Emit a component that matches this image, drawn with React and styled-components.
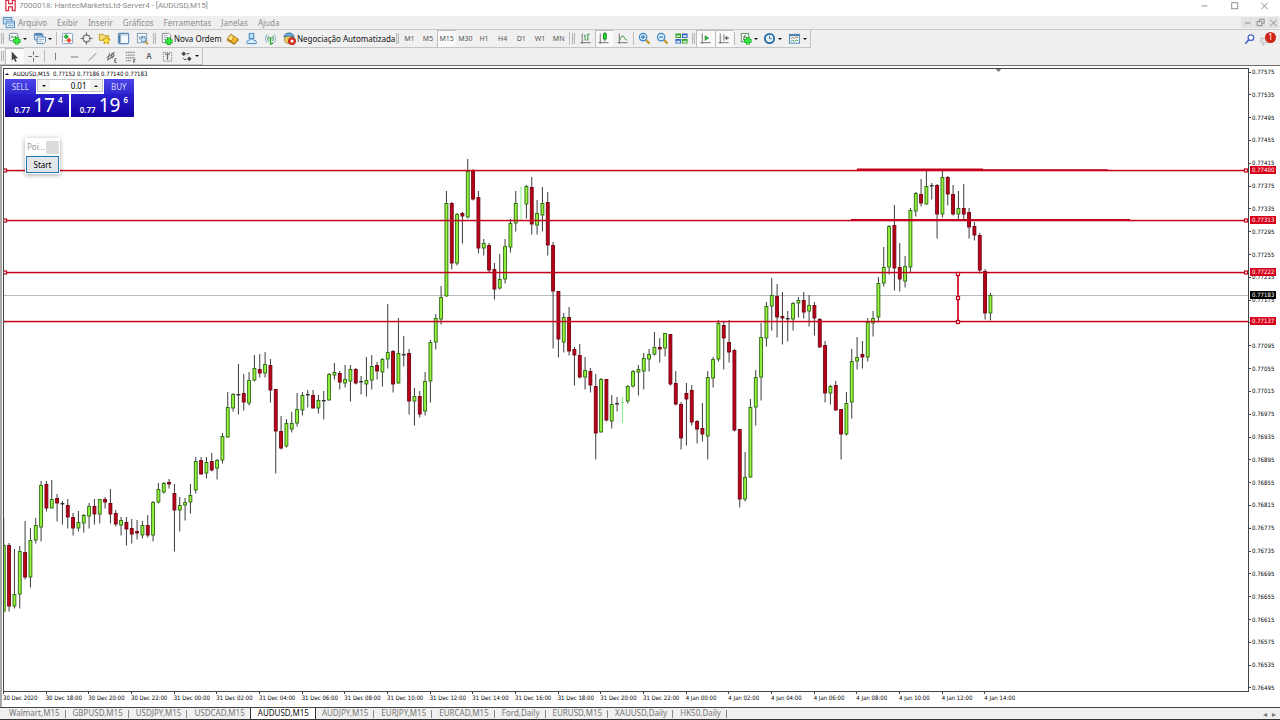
import { createGlobalStyle, styled } from 'styled-components';

const MENUS = ['Arquivo', 'Exibir', 'Inserir', 'Gráficos', 'Ferramentas', 'Janelas', 'Ajuda'];
const TIMEFRAMES = ['M1', 'M5', 'M15', 'M30', 'H1', 'H4', 'D1', 'W1', 'MN'];
const TABS = [
  'Walmart,M15',
  'GBPUSD,M15',
  'USDJPY,M15',
  'USDCAD,M15',
  'AUDUSD,M15',
  'AUDJPY,M15',
  'EURJPY,M15',
  'EURCAD,M15',
  'Ford,Daily',
  'EURUSD,M15',
  'XAUUSD,Daily',
  'HK50,Daily',
];
const TIMES = [
  '30 Dec 2020',
  '30 Dec 18:00',
  '30 Dec 20:00',
  '30 Dec 22:00',
  '31 Dec 00:00',
  '31 Dec 02:00',
  '31 Dec 04:00',
  '31 Dec 06:00',
  '31 Dec 08:00',
  '31 Dec 10:00',
  '31 Dec 12:00',
  '31 Dec 14:00',
  '31 Dec 16:00',
  '31 Dec 18:00',
  '31 Dec 20:00',
  '31 Dec 22:00',
  '4 Jan 00:00',
  '4 Jan 02:00',
  '4 Jan 04:00',
  '4 Jan 06:00',
  '4 Jan 08:00',
  '4 Jan 10:00',
  '4 Jan 12:00',
  '4 Jan 14:00',
];
const PRICES = Array.from({ length: 28 }, (_, i) => ((77575 - i * 40) / 100000).toFixed(5));

const LEVELS = [
  { price: '0.77400', y: 170, handles: true },
  { price: '0.77313', y: 220, handles: true },
  { price: '0.77222', y: 272, handles: true },
  { price: '0.77137', y: 321, handles: false },
];

// kind (u up, d down, n doji, g ghost), high, body top, body bottom, low
const CANDLES = `
u 518 545 611 612|d 543 545 606 611|u 549 594 606 608|u 546 551 594 608|d 521 552 577 579
u 528 540 577 587|u 518 525 540 543|u 481 485 527 541|d 481 484 508 511|u 480 499 508 508
d 494 498 503 521|n 501 503 504 524|d 499 505 517 528|d 513 517 528 535|u 511 522 528 531
u 514 515 523 532|u 503 506 516 528|d 499 506 514 524|u 499 499 514 523|d 497 499 502 508
d 489 503 514 523|d 510 513 524 526|u 517 520 525 535|d 517 522 529 545|d 519 528 534 543
d 520 531 533 539|u 521 525 535 538|d 515 525 535 537|u 501 502 535 541|u 483 489 502 503
u 482 483 492 493|d 479 482 484 488|d 484 493 510 551|u 497 505 510 531|u 498 502 505 520
u 484 495 502 513|u 457 461 490 493|d 457 460 474 474|u 457 462 473 478|d 453 461 470 471
u 459 460 468 479|u 433 436 460 463|u 392 407 437 437|u 393 394 408 411|n 364 394 395 414
d 374 393 402 410|u 372 380 403 405|u 355 368 380 381|d 354 369 373 377|u 352 364 373 377
d 359 365 390 402|d 389 389 431 473|d 416 431 448 449|u 419 423 446 447|u 412 423 429 432
u 393 409 423 426|u 392 395 410 415|n 390 394 395 407|d 390 395 408 408|u 395 400 408 413
n 391 400 401 419|u 373 374 400 400|u 363 372 375 379|d 371 373 382 389|u 365 379 383 387
u 365 369 381 401|d 368 369 383 384|n 376 381 382 394|u 357 380 384 396|u 355 366 380 389
d 362 365 371 379|u 358 359 372 386|u 304 352 359 368|d 350 351 384 392|u 318 353 383 383
n 336 354 355 366|d 349 353 401 414|u 388 396 401 425|d 391 396 414 417|u 372 381 411 415
u 340 342 381 402|u 314 318 342 349|u 286 297 319 324|u 191 203 296 296|d 202 203 263 269
u 213 214 263 265|d 212 213 216 243|u 159 171 217 218|d 169 170 199 200|d 191 197 248 253
u 239 243 248 255|d 243 245 270 272|d 263 269 289 299|u 254 279 288 289|u 239 246 279 283
u 219 223 247 252|u 191 203 223 231|g 187 187 220 220|u 185 186 204 218|d 177 187 224 234
u 200 213 225 234|u 187 203 215 231|d 192 202 245 255|d 242 245 291 348|d 291 291 339 357
u 313 317 342 352|d 307 317 351 355|d 347 349 355 385|d 344 355 377 378|u 357 370 377 389
d 368 371 385 392|d 374 386 433 459|u 378 379 432 432|d 379 379 420 421|u 395 404 421 428
n 397 403 404 411|g 397 402 403 423|u 385 386 401 403|u 370 371 386 387|u 365 369 372 395
u 353 358 371 389|u 349 354 359 371|u 332 347 354 355|d 338 347 349 362|u 333 333 348 356
d 334 334 384 385|d 371 383 404 405|d 402 404 438 449|d 383 393 399 445|d 385 390 422 425
d 420 421 429 443|d 403 428 434 441|u 371 377 436 459|u 357 359 378 387|u 320 323 359 361
d 322 325 338 369|d 320 342 352 362|d 349 350 430 431|d 429 429 499 507|u 452 477 499 501
u 399 407 477 477|u 370 377 407 425|u 323 337 377 400|u 302 306 338 346|u 278 295 306 330
d 284 296 317 337|d 292 316 318 344|n 311 318 319 341|u 302 303 319 330|u 297 300 303 317
d 292 300 312 318|u 295 305 311 326|d 302 305 318 335|d 318 319 347 347|d 341 345 393 402
u 385 386 393 404|d 381 385 410 410|d 409 409 434 459|u 392 403 434 435|u 349 361 402 418
u 337 357 361 369|d 341 354 357 368|u 318 322 357 361|u 311 318 323 336|u 277 283 317 322
u 247 267 283 286|u 225 226 267 274|d 205 225 268 290|d 243 267 279 291|u 256 266 281 287
u 208 210 267 272|u 192 193 211 216|d 179 194 203 206|u 171 186 204 204|n 183 185 186 199
d 184 185 214 238|u 169 177 214 217|d 176 177 194 205|d 185 194 214 215|u 191 208 214 219
d 184 208 214 219|d 208 212 227 238|d 222 226 235 240|d 233 235 270 273|d 269 271 313 319
u 293 295 313 320`
  .trim()
  .split(/[|\n]/)
  .map(row => {
    const [kind, ...levels] = row.split(' ');
    const [high, top, bottom, low] = levels.map(Number);
    return { kind, high, top, bottom, low };
  });

const FILL = { u: '#96f23c', d: '#bc0018', n: '#333333' };
const STROKE = { u: '#2b6a10', d: '#70000f', n: '#333333' };

const Candle = ({ index, kind, high, top, bottom, low }) => {
  const x = 3.75 + (index * 16) / 3;
  if (kind === 'g') {
    const wide = bottom - top > 10;
    return (
      <g fill={wide ? '#c4f8c4' : '#7dee7d'}>
        <rect x={x - (wide ? 1 : 0.5)} y={high} width={wide ? 2 : 1} height={low - high} />
        {!wide && <rect x={x - 1.5} y={top} width="3" height="1" />}
      </g>
    );
  }
  return (
    <g>
      <rect x={x - 0.5} y={high} width="1" height={low - high + 0.5} fill="#3c3c3c" />
      <rect
        x={x - 1.45}
        y={top + 0.5}
        width="2.9"
        height={Math.max(bottom - top - 0.5, 0.3)}
        fill={FILL[kind]}
        stroke={STROKE[kind]}
        strokeWidth=".9"
      />
    </g>
  );
};

const Handle = ({ x, y }) => (
  <rect x={x - 1.5} y={y - 1.5} width="3" height="3" fill="#fff" stroke="#c4001c" strokeWidth="1.200" />
);

const PriceChart = () => (
  <ChartSvg role="img" aria-label="AUDUSD,M15">
    <g transform="translate(-4 -69)">
      <path d="M995 68h7l-3.500 4z" fill="#777" />
      <rect x="4" y="295" width="100%" height="1" fill="#b4babd" />
      {CANDLES.map((candle, index) => (
        <Candle key={index} index={index} {...candle} />
      ))}
      {LEVELS.map(({ price, y }) => (
        <rect key={price} x="4" y={y - 0.2} width="100%" height="1.500" fill="#c4001c" />
      ))}
      <path d="M857 169.300H983" stroke="#c4001c" strokeWidth="1.800" />
      <path d="M983 169.800H1108M851 219.500H1130" stroke="#c4001c" strokeWidth="1.200" />
      <path d="M958 274V322" stroke="#d0142c" strokeWidth="1.800" />
      <Handle x={958} y={274} />
      <Handle x={958} y={298} />
      <Handle x={958} y={322} />
      {LEVELS.filter(level => level.handles).map(({ price, y }) => (
        <Handle key={price} x={5} y={y + 0.5} />
      ))}
    </g>
    <svg x="100%" overflow="visible">
      {LEVELS.filter(level => level.handles).map(({ price, y }) => (
        <Handle key={price} x={-2} y={y - 68.5} />
      ))}
    </svg>
  </ChartSvg>
);

const ICONS = {
  logo: (
    <g fill="none" stroke="#d8283c" strokeWidth="1.300">
      <path d="M2 1.500h3v3.500h4V1.500h3v11H9V8.500H5v4H2z" />
    </g>
  ),
  appWindows: (
    <g fill="#eaf3fb" stroke="#4f8dc4">
      <rect x="1.500" y="1.500" width="9" height="7" />
      <path d="M1.500 3.500h9" />
      <rect x="4.500" y="5.500" width="9" height="7" />
      <path d="M4.500 7.500h9M6.500 10.500l2-1 2 1 2-1" />
    </g>
  ),
  newChart: (
    <>
      <rect x="1.500" y="1.500" width="9" height="8" rx="1" fill="#fff" stroke="#6b8299" />
      <path d="M3 4.500h2M3 7l2-2 2 1 2-2" fill="none" stroke="#2a8f35" />
      <path d="M9.500 5.500v8M5.500 9.500h8" stroke="#0c9a1a" strokeWidth="4" />
      <path d="M9.500 6v7M6 9.500h7" stroke="#35e840" strokeWidth="2.600" />
    </>
  ),
  profiles: (
    <g stroke="#4c82b4">
      <rect x="1.500" y="1.500" width="9" height="7" rx="1" fill="#dcebf8" />
      <path d="M2 3h8" strokeWidth="2" />
      <path d="M4.500 5.500h9v5l-2 2h-7z" fill="#f4f9fe" />
      <path d="M6 8h6M6 10h4" stroke="#8eb2d2" />
    </g>
  ),
  marketWatch: (
    <>
      <rect x="1.500" y="1.500" width="11" height="11" rx="1" fill="#fff" stroke="#7a9cbc" />
      <path d="M3 5l2.500-2.500L8 5 5.500 7.500z" fill="#21b52d" stroke="#157a1d" strokeWidth=".5" />
      <path d="M6 9l2.500-2.500L11 9l-2.500 2.500z" fill="#f04a3c" stroke="#a32a20" strokeWidth=".5" />
      <path d="M3 9.500h2" stroke="#d1a95d" />
    </>
  ),
  dataWindow: (
    <g fill="none" stroke="#6f6f6f" strokeWidth="1.200">
      <circle cx="7" cy="7" r="3.800" />
      <path d="M7 .5v4M7 9.500v4M.5 7h4M9.500 7h4" />
    </g>
  ),
  navigator: (
    <g stroke="#c59a1c">
      <path d="M1.500 2.500h4l1 1.500h5v5h-10z" fill="#f8df7b" />
      <path d="M9 5l1.300 2.600 2.900.4-2.100 2 .5 2.800L9 11.500l-2.600 1.300.5-2.800-2.100-2 2.900-.4z" fill="#ffe83b" />
    </g>
  ),
  terminal: (
    <>
      <rect x="1.500" y="1.500" width="11" height="11" rx="1" fill="#f5faff" stroke="#5f8db8" strokeWidth="1.200" />
      <path d="M2 3h10" stroke="#9dbcd8" />
      <path d="M3 3v8.500" stroke="#42719e" strokeWidth="1.600" />
    </>
  ),
  tester: (
    <>
      <rect x="1.500" y="1.500" width="10" height="10" fill="#f7fbff" stroke="#7d9ab5" />
      <path d="M3 5h1v3M5 7l1.500-3L8 7l2-3" fill="none" stroke="#8295a6" />
      <circle cx="8" cy="8" r="2.600" fill="#c8e4f7" stroke="#4a84b5" />
      <path d="M10 10l3 3" stroke="#c79a35" strokeWidth="1.800" />
    </>
  ),
  order: (
    <>
      <path d="M2.500 1.500h7l2 2v8h-9z" fill="#fff" stroke="#7d8790" />
      <path d="M4 4h4M4 6h5M4 8h3" stroke="#97a3ad" />
      <path d="M9.500 6v8M5.500 10h8" stroke="#0c9a1a" strokeWidth="4" />
      <path d="M9.500 6.500v7M6 10h7" stroke="#35e840" strokeWidth="2.600" />
    </>
  ),
  gold: (
    <g stroke="#a06d0a" strokeWidth=".8">
      <path d="M1.500 7.500L5 2.500l8 5-4 5z" fill="#f3bd2f" />
      <path d="M1.500 7.500L5 2.500l3.500 2.200-2.600 5z" fill="#ffe18a" />
      <path d="M1.500 7.500v1.800l7.500 4v-1.500M13 7.500v1.800l-4 4" fill="#d08f14" />
    </g>
  ),
  publish: (
    <g stroke="#3f86bf">
      <path d="M4.500 1.500h5v6h-5z" fill="#9fd0f1" />
      <path d="M6 3h2M6 5h2" stroke="#fff" />
      <path d="M2.500 12.500c-1.500-2 0-4 2-3.500 1-2 4-2 5 0 2-.6 3.500 1.500 2.500 3.500z" fill="#d8ecfa" />
    </g>
  ),
  signal: (
    <g fill="none" strokeWidth="1.100">
      <path d="M3.500 2.500c-2.500 2.500-2.500 6.500 0 9M10.500 2.500c2.500 2.500 2.500 6.500 0 9" stroke="#8fb2c6" />
      <path d="M5 4.500c-1.300 1.500-1.300 3.500 0 5M9 4.500c1.300 1.500 1.300 3.500 0 5" stroke="#57a070" />
      <path d="M7 7v6l3-1" stroke="#2eaf3b" strokeWidth="1.600" />
      <circle cx="7" cy="6.500" r="1.200" fill="#29a838" stroke="none" />
    </g>
  ),
  autoTrade: (
    <>
      <ellipse cx="6.500" cy="8" rx="5" ry="4.500" fill="#f1c95a" stroke="#9a7b28" strokeWidth=".8" />
      <path d="M1 5.500C1 3 3.500 1 6.500 1S12 3 12 5.500C9 4 4 4 1 5.500z" fill="#72afd9" stroke="#34739f" />
      <circle cx="9.700" cy="9.800" r="3.900" fill="#d92b1d" stroke="#9c1209" strokeWidth=".7" />
      <rect x="8.200" y="8.300" width="3" height="3" fill="#fff" />
    </>
  ),
  bars: (
    <g fill="none">
      <path d="M3.500 1.500v11M1.500 11.500h11" stroke="#6c6c6c" />
      <path d="M6.500 3v6M9.500 2v7M9.500 2.500h2M8 8.500h1.500M6.500 4h-1" stroke="#2f8a3b" />
    </g>
  ),
  candles: (
    <g fill="none">
      <path d="M3.500 1.500v11M1.500 11.500h11" stroke="#6c6c6c" />
      <path d="M8.500 0v10" stroke="#168422" />
      <rect x="7" y="2" width="3" height="5.500" fill="#25e437" stroke="#168422" />
    </g>
  ),
  line: (
    <g fill="none">
      <path d="M3.500 1.500v11M1.500 11.500h11" stroke="#6c6c6c" />
      <path d="M4 9c1-5 4-6 5-3s2 2 3 2.500" stroke="#2f8a3b" />
    </g>
  ),
  zoomIn: (
    <>
      <path d="M8.500 8.500l4 4" stroke="#c99b34" strokeWidth="2.400" />
      <circle cx="5.500" cy="5.500" r="4" fill="#d9effc" stroke="#3b82c4" strokeWidth="1.200" />
      <path d="M5.500 3.300v4.400M3.300 5.500h4.400" stroke="#2b73ba" strokeWidth="1.200" />
    </>
  ),
  zoomOut: (
    <>
      <path d="M8.500 8.500l4 4" stroke="#c99b34" strokeWidth="2.400" />
      <circle cx="5.500" cy="5.500" r="4" fill="#d9effc" stroke="#3b82c4" strokeWidth="1.200" />
      <path d="M3.300 5.500h4.400" stroke="#2b73ba" strokeWidth="1.200" />
    </>
  ),
  tiles: (
    <>
      <path d="M.5 1.500h6v5h-6zM7.500 7.500h6v5h-6z" fill="#2c9e2f" />
      <path d="M7.500 1.500h6v5h-6zM.5 7.500h6v5h-6z" fill="#2d62b8" />
      <path d="M1.500 3.500h4v2h-4zM8.500 9.500h4v2h-4z" fill="#c8f0bc" />
      <path d="M8.500 3.500h4v2h-4zM1.500 9.500h4v2h-4z" fill="#d4e6fb" />
    </>
  ),
  autoScroll: (
    <g fill="none">
      <path d="M3.500 1.500v11M1.500 11.500h11" stroke="#6c6c6c" />
      <path d="M6.500 4l4 2.500-4 2.500z" fill="#22b52f" stroke="#168422" strokeWidth=".6" />
    </g>
  ),
  shift: (
    <g fill="none" stroke="#6c6c6c">
      <path d="M3.500 1.500v11M1.500 11.500h11M7.500 2.500v7" />
      <path d="M9 6.500h4" stroke="#505050" />
      <path d="M8.500 6.500l2.500-2.500v5z" fill="#505050" stroke="none" />
    </g>
  ),
  indicators: (
    <>
      <rect x="2.500" y="1.500" width="8" height="9" fill="#f4fff2" stroke="#628a63" />
      <path d="M4.500 9c1-1 1-6 3-6M4.500 5.500h3" fill="none" stroke="#5d6d60" />
      <path d="M9.500 5.500v8M5.500 9.500h8" stroke="#0c9a1a" strokeWidth="4" />
      <path d="M9.500 6v7M6 9.500h7" stroke="#35e840" strokeWidth="2.600" />
    </>
  ),
  clock: (
    <>
      <circle cx="7" cy="7" r="5" fill="#e7f4fd" stroke="#2169a8" strokeWidth="1.900" />
      <path d="M7 4v3.200h2.500" fill="none" stroke="#2e6389" />
    </>
  ),
  template: (
    <>
      <rect x="1.500" y="2.500" width="11" height="9.500" fill="#f5fafe" stroke="#4980af" />
      <path d="M2 3.500h10" stroke="#4980af" strokeWidth="2" />
      <path d="M3 7l2-1 2 1 2-1.500 2 .5" fill="none" stroke="#a4753d" />
      <path d="M3 10l2-1 2 1 2-1.500 2 1" fill="none" stroke="#3f9956" />
    </>
  ),
  cursor: <path d="M4 1.500v10l2.300-2 1.500 3.400 1.600-.7-1.500-3.300h3z" fill="#444" />,
  crosshair: <path d="M7 1.500v4M7 8.500v4M1.500 7h4M8.500 7h4" stroke="#666" />,
  vline: <path d="M7 3v8" stroke="#777" />,
  hline: <path d="M3 7.500h8" stroke="#777" />,
  trend: <path d="M3 11.500l8-8" stroke="#777" />,
  channel: (
    <g fill="none" stroke="#555" strokeWidth=".9">
      <path d="M1.500 8.500l8-5M2.500 11l8-5M3 11l2-8M6 9.500l2-7M8 9l2-7" />
      <path d="M12.500 9.500h-2v4h2M10.500 11.500h1.500" />
    </g>
  ),
  fibo: (
    <g fill="none" stroke="#666">
      <path d="M2 2.500h10M2 5.500h10M2 8.500h10M2 11.500h6" strokeDasharray="1.500 .5" />
      <path d="M12.500 10h-2v4M10.500 12h1.500" />
    </g>
  ),
  label: (
    <g fill="none" stroke="#666">
      <rect x="2.500" y="2.500" width="9" height="9.500" strokeDasharray="1 1" />
      <path d="M4.500 4.500h5M7 4.500v6" strokeWidth="1.300" />
    </g>
  ),
  arrows: (
    <g fill="#444">
      <path d="M4 1.500l2.500 2.500L4 6.500 1.500 4z" />
      <path d="M10 7l2.500 2.500L10 12 7.500 9.500z" />
      <path d="M7 4.500l3-1M3.500 8.500l1.500 2 2-.5" fill="none" stroke="#444" />
    </g>
  ),
  search: (
    <>
      <circle cx="8.500" cy="5" r="3" fill="#fff" stroke="#4565c8" strokeWidth="1.400" />
      <path d="M6.200 7.300L2.500 11.500" stroke="#4565c8" strokeWidth="1.800" />
    </>
  ),
  chat: <path d="M2 5.500h9v5H7l-2.500 3v-3H2z" fill="#dedede" stroke="#bcbcbc" />,
  minimize: <path d="M4 7.500h6" stroke="#888" />,
  maximize: <rect x="4" y="4" width="6.500" height="6.500" fill="none" stroke="#888" />,
  close: <path d="M3.500 4l7 7M10.500 4l-7 7" stroke="#888" />,
  restore: (
    <g fill="none" stroke="#888">
      <rect x="3.500" y="6" width="5" height="4.500" />
      <path d="M6 6V3.500h5V8H9" />
    </g>
  ),
};

const Icon = ({ name }) => (
  <IconSvg viewBox="0 0 14 14" aria-hidden="true">
    {ICONS[name]}
  </IconSvg>
);

const Tool = ({ icon, label, active }) => (
  <ToolButton type="button" aria-label={label} $active={active}>
    <Icon name={icon} />
  </ToolButton>
);

const DropTool = ({ icon, label }) => (
  <DropButton type="button" aria-label={label}>
    <Icon name={icon} />
    <Caret />
  </DropButton>
);

const Header = () => (
  <header>
    <TitleBar>
      <Icon name="logo" />
      <Title>7000018: HantecMarketsLtd-Server4 - [AUDUSD,M15]</Title>
      <WindowButton type="button" aria-label="Minimizar">
        <Icon name="minimize" />
      </WindowButton>
      <WindowButton type="button" aria-label="Maximizar">
        <Icon name="maximize" />
      </WindowButton>
      <WindowButton type="button" aria-label="Fechar">
        <Icon name="close" />
      </WindowButton>
    </TitleBar>
    <MenuBar>
      <Icon name="appWindows" />
      <MenuList>
        {MENUS.map(menu => (
          <button key={menu} type="button">
            {menu}
          </button>
        ))}
      </MenuList>
      <ChildButton type="button" aria-label="Minimizar gráfico">
        <Icon name="minimize" />
      </ChildButton>
      <ChildButton type="button" aria-label="Restaurar gráfico">
        <Icon name="restore" />
      </ChildButton>
      <ChildButton type="button" aria-label="Fechar gráfico">
        <Icon name="close" />
      </ChildButton>
    </MenuBar>
  </header>
);

const MainToolbar = () => (
  <ToolbarRow>
    <Toolbar>
      <Grip />
      <ToolGroup $width={50}>
        <DropTool icon="newChart" label="Novo gráfico" />
        <DropTool icon="profiles" label="Perfis" />
      </ToolGroup>
      <Separator />
      <ToolGroup $width={94}>
        <Tool icon="marketWatch" label="Observação do mercado" />
        <Tool icon="dataWindow" label="Janela de dados" />
        <Tool icon="navigator" label="Navegador" />
        <Tool icon="terminal" label="Terminal" />
        <Tool icon="tester" label="Testador" />
      </ToolGroup>
      <Grip />
      <TextButton type="button" $width={66}>
        <Icon name="order" />
        Nova Ordem
      </TextButton>
      <ToolGroup $width={57}>
        <Tool icon="gold" label="MetaEditor" />
        <Tool icon="publish" label="Publicar" />
        <Tool icon="signal" label="Sinais" />
      </ToolGroup>
      <TextButton type="button" $width={115}>
        <Icon name="autoTrade" />
        Negociação Automatizada
      </TextButton>
      <Grip />
      <ToolGroup $width={168}>
        {TIMEFRAMES.map(frame => (
          <Timeframe key={frame} type="button" $active={frame === 'M15'}>
            {frame}
          </Timeframe>
        ))}
      </ToolGroup>
      <Separator />
      <Grip />
      <ToolGroup $width={56}>
        <Tool icon="bars" label="Barras" />
        <Tool icon="candles" label="Velas" active />
        <Tool icon="line" label="Linha" />
      </ToolGroup>
      <Separator />
      <ToolGroup $width={56}>
        <Tool icon="zoomIn" label="Aumentar zoom" />
        <Tool icon="zoomOut" label="Diminuir zoom" />
        <Tool icon="tiles" label="Lado a lado" />
      </ToolGroup>
      <Grip />
      <ToolGroup $width={37}>
        <Tool icon="autoScroll" label="Rolagem automática" active />
        <Tool icon="shift" label="Deslocar gráfico" active />
      </ToolGroup>
      <Separator />
      <ToolGroup $width={74}>
        <DropTool icon="indicators" label="Indicadores" />
        <DropTool icon="clock" label="Períodos" />
        <DropTool icon="template" label="Modelos" />
      </ToolGroup>
    </Toolbar>
    <RightTools>
      <ToolGroup $width={19}>
        <Tool icon="search" label="Buscar" />
      </ToolGroup>
      <ChatButton type="button" aria-label="Mensagens">
        <Icon name="chat" />
        <Badge>1</Badge>
      </ChatButton>
    </RightTools>
  </ToolbarRow>
);

const DrawToolbar = () => (
  <ToolbarRow>
    <Toolbar>
      <Grip />
      <ToolGroup $width={38}>
        <Tool icon="cursor" label="Cursor" active />
        <Tool icon="crosshair" label="Mira" />
      </ToolGroup>
      <Separator />
      <ToolGroup $width={131}>
        <Tool icon="vline" label="Linha vertical" />
        <Tool icon="hline" label="Linha horizontal" />
        <Tool icon="trend" label="Linha de tendência" />
        <Tool icon="channel" label="Canal" />
        <Tool icon="fibo" label="Fibonacci" />
        <ToolButton type="button">A</ToolButton>
        <Tool icon="label" label="Etiqueta" />
      </ToolGroup>
      <ToolGroup $width={25}>
        <DropTool icon="arrows" label="Setas" />
      </ToolGroup>
    </Toolbar>
  </ToolbarRow>
);

const Quote = ({ base, big, pip }) => (
  <QuoteButton type="button">
    <small>{base}</small>
    <strong>{big}</strong>
    <sup>{pip}</sup>
  </QuoteButton>
);

const TradePanel = () => (
  <TradeBox>
    <Ohlc>
      <UpMark />
      AUDUSD,M15&nbsp; 0.77152 0.77186 0.77140 0.77183
    </Ohlc>
    <TradeTop>
      <SideButton type="button">SELL</SideButton>
      <Spinner>
        <SpinButton type="button" aria-label="Diminuir volume">
          <Caret />
        </SpinButton>
        <VolumeInput aria-label="Volume" defaultValue="0.01" />
        <SpinButton type="button" aria-label="Aumentar volume">
          <UpMark />
        </SpinButton>
      </Spinner>
      <SideButton type="button">BUY</SideButton>
    </TradeTop>
    <TradeBottom>
      <Quote base="0.77" big="17" pip="4" />
      <Quote base="0.77" big="19" pip="6" />
    </TradeBottom>
  </TradeBox>
);

const App = () => (
  <Terminal>
    <GlobalStyle />
    <Header />
    <MainToolbar />
    <DrawToolbar />
    <ChartWindow>
      <Plot>
        <PriceChart />
        <TradePanel />
        <FloatingWindow>
          <FloatingTitle>
            Poi...
            <span />
          </FloatingTitle>
          <StartButton type="button">Start</StartButton>
        </FloatingWindow>
      </Plot>
      <PriceAxis>
        {PRICES.map(price => (
          <li key={price}>{price}</li>
        ))}
        {LEVELS.map(({ price, y }) => (
          <PriceTag key={price} $y={y}>
            {price}
          </PriceTag>
        ))}
        <PriceTag $y={295} $current>
          0.77183
        </PriceTag>
      </PriceAxis>
      <TimeAxis>
        {TIMES.map(time => (
          <li key={time}>{time}</li>
        ))}
      </TimeAxis>
    </ChartWindow>
    <TabBar>
      {TABS.map(tab => (
        <Tab key={tab} type="button" $active={tab === 'AUDUSD,M15'}>
          {tab}
        </Tab>
      ))}
      <TabScroll>
        <button type="button" aria-label="Anterior">
          ◂
        </button>
        <button type="button" aria-label="Próximo">
          ▸
        </button>
      </TabScroll>
    </TabBar>
  </Terminal>
);
export default App;

const GlobalStyle = createGlobalStyle`
  * {
    box-sizing: border-box;
  }
  body {
    margin: 0;
    background: #fff;
    font: 8px/10px "Noto Sans", "Open Sans", sans-serif;
    color: #111;
  }
  button, input {
    margin: 0;
    padding: 0;
    border: 0;
    border-radius: 0;
    background: none;
    font: inherit;
    color: inherit;
  }
  ul {
    margin: 0;
    padding: 0;
    list-style: none;
  }
`;

const Terminal = styled.div`
  display: flex;
  flex-direction: column;
  min-height: 100vh;
`;

const IconSvg = styled.svg`
  display: block;
  flex: none;
  width: 13px;
  height: 13px;
`;

const TitleBar = styled.div`
  display: flex;
  align-items: center;
  height: 16px;
  padding: 0 2px 5px 4px;
  gap: 2px;
  font-family: Roboto, sans-serif;
  color: #8c8c8c;
`;

const Title = styled.span`
  flex: 1;
`;

const WindowButton = styled.button`
  display: flex;
  justify-content: center;
  width: 28px;
`;

const MenuBar = styled.div`
  display: flex;
  align-items: center;
  height: 14px;
  padding: 0 1px 0 2px;
  background: #efefef;
  border-bottom: 1px solid #c9c9c9;
  color: #8c8c8c;
`;

const MenuList = styled.nav`
  display: flex;
  flex: 1;
  gap: 10px;
  padding-left: 3px;
`;

const ChildButton = styled.button`
  display: flex;
  justify-content: center;
  align-items: center;
  width: 12px;
  height: 11px;
  margin-left: 1px;
  background: #e2e2e2;
`;

const ToolbarRow = styled.div`
  display: flex;
  justify-content: space-between;
  height: 18px;
  background: #efefef;
  & + & {
    height: 17px;
  }
`;

const Toolbar = styled.div`
  display: flex;
  align-items: stretch;
  border: 1px solid #c4c4c4;
  border-width: 0 1px 1px 0;
  background: #f0f0f0;
`;

const ToolGroup = styled.div`
  display: grid;
  grid-auto-flow: column;
  grid-auto-columns: 1fr;
  width: ${({ $width }) => $width}px;
`;

const Grip = styled.span`
  width: 3px;
  margin: 3px 1px;
  border: 1px solid #b8b8b8;
  border-width: 0 1px;
  background: #e6e6e6;
`;

const Separator = styled.span`
  width: 1px;
  margin: 2px 1px;
  background: #bdbdbd;
`;

const ToolButton = styled.button`
  display: flex;
  justify-content: center;
  align-items: center;
  font-weight: 600;
  color: #555;
  background: ${({ $active }) => ($active ? '#fafafa' : 'none')};
  box-shadow: ${({ $active }) => ($active ? 'inset 1px 1px #bdbdbd' : 'none')};
`;

const DropButton = styled.button`
  display: flex;
  justify-content: center;
  align-items: center;
  gap: 2px;
`;

const TextButton = styled.button`
  display: flex;
  align-items: center;
  gap: 1px;
  width: ${({ $width }) => $width}px;
  padding-left: 3px;
  white-space: nowrap;
`;

const Caret = styled.i`
  border: 2px solid transparent;
  border-top-color: #111;
  border-bottom: 0;
`;

const UpMark = styled.i`
  border: 2px solid transparent;
  border-bottom-color: #111;
  border-top: 0;
`;

const Timeframe = styled.button`
  font-size: 7px;
  color: #555;
  background: ${({ $active }) => ($active ? '#fafafa' : 'none')};
  box-shadow: ${({ $active }) => ($active ? 'inset 1px 1px #bdbdbd' : 'none')};
`;

const RightTools = styled.div`
  display: flex;
  padding-right: 5px;
`;

const ChatButton = styled.button`
  position: relative;
  width: 16px;
`;

const Badge = styled.span`
  position: absolute;
  top: 2px;
  right: -1px;
  width: 11px;
  height: 11px;
  border-radius: 50%;
  background: #cf2519;
  color: #fff;
`;

const ChartWindow = styled.main`
  display: grid;
  flex: 1;
  grid-template: 1fr 15px / 1fr 31px;
  padding: 2px 0 0 1px;
  border-top: 1px solid #6e6e6e;
  border-left: 2px solid #a8a8a8;
  font-family: "DejaVu Sans Condensed", "Noto Sans", sans-serif;
  font-size: 6px;
  line-height: 8px;
  color: #000;
`;

const Plot = styled.section`
  position: relative;
  min-height: 600px;
  border: 1px solid #444;
  overflow: hidden;
`;

const ChartSvg = styled.svg`
  display: block;
  position: absolute;
  inset: 0;
  width: 100%;
  height: 100%;
`;

const PriceAxis = styled.ul`
  position: relative;
  display: flex;
  flex-direction: column;
  justify-content: space-between;
  height: 624px;
  li {
    display: flex;
    align-items: center;
    gap: 1px;
  }
  li:before {
    content: '';
    width: 2px;
    height: 1px;
    background: #444;
  }
`;

const PriceTag = styled.b`
  position: absolute;
  top: ${({ $y }) => $y - 72}px;
  left: 1px;
  padding: 0 2px;
  font-weight: 400;
  color: #fff;
  background: ${({ $current }) => ($current ? '#000' : '#d80019')};
`;

const TimeAxis = styled.ul`
  display: grid;
  grid-template-columns: repeat(24, 1fr);
  width: 1024px;
  padding-top: 2px;
  white-space: nowrap;
  li {
    position: relative;
  }
  li:before {
    content: '';
    position: absolute;
    top: -2px;
    left: 0;
    width: 1px;
    height: 2px;
    background: #444;
  }
`;

const TradeBox = styled.div`
  position: absolute;
  top: 0;
  left: 1px;
  width: 129px;
`;

const Ohlc = styled.div`
  display: flex;
  align-items: center;
  gap: 4px;
  height: 10px;
  white-space: nowrap;
`;

const TradeTop = styled.div`
  display: flex;
  height: 15px;
  font-family: "Noto Sans", sans-serif;
  font-size: 8px;
`;

const SideButton = styled.button`
  flex: 1;
  background: linear-gradient(#4a44ea, #3029cf);
  color: #d5d5ff;
`;

const Spinner = styled.div`
  display: flex;
  width: 66px;
  height: 13px;
  margin: 0 1px;
  border: 1px solid #c4c4c4;
`;

const SpinButton = styled.button`
  display: flex;
  justify-content: center;
  align-items: center;
  width: 12px;
  background: #f1f1f1;
`;

const VolumeInput = styled.input`
  flex: 1;
  min-width: 0;
  padding-right: 3px;
  text-align: right;
`;

const TradeBottom = styled.div`
  display: flex;
  gap: 2px;
  font-family: "Noto Sans", sans-serif;
`;

const QuoteButton = styled.button`
  display: flex;
  flex: 1;
  justify-content: flex-end;
  align-items: flex-end;
  gap: 3px;
  height: 23px;
  padding: 0 6px 2px 0;
  background: linear-gradient(#2a20cf, #1500a0);
  color: #fff;
  small {
    font-size: 8px;
    font-weight: 600;
    line-height: 10px;
  }
  strong {
    font-size: 19px;
    font-weight: 400;
    line-height: 19px;
  }
  sup {
    align-self: flex-start;
    font-size: 8px;
    font-weight: 600;
    line-height: 12px;
  }
`;

const FloatingWindow = styled.div`
  position: absolute;
  top: 69px;
  left: 21px;
  width: 35px;
  padding: 0 1px 1px;
  background: #fff;
  box-shadow: 0 1px 5px rgba(0, 0, 0, 0.35);
  font-family: "Noto Sans", sans-serif;
  font-size: 8px;
`;

const FloatingTitle = styled.div`
  display: flex;
  justify-content: space-between;
  align-items: center;
  height: 18px;
  padding-left: 1px;
  color: #9a9a9a;
  span {
    width: 13px;
    height: 13px;
    background: #dcdcdc;
  }
`;

const StartButton = styled.button`
  width: 100%;
  height: 17px;
  border: 1px solid #2478b5;
  background: #e3e6e8;
`;

const TabBar = styled.footer`
  display: flex;
  height: 14px;
  padding-left: 3px;
  border-top: 1px solid #444;
  border-bottom: 2px solid #333;
  background: #f0f0f0;
  line-height: 8px;
`;

const Tab = styled.button`
  position: relative;
  padding: 0 6px 1px;
  color: ${({ $active }) => ($active ? '#111' : '#777')};
  background: ${({ $active }) => ($active ? '#fff' : 'none')};
  box-shadow: ${({ $active }) => ($active ? '-1px 0 #333, 1px 0 #333' : 'none')};
  & + & {
    padding-left: 7px;
  }
  &:after {
    content: '';
    position: absolute;
    top: 2px;
    right: 0;
    width: 1px;
    height: 8px;
    background: ${({ $active }) => ($active ? 'transparent' : '#888')};
  }
`;

const TabScroll = styled.div`
  display: flex;
  gap: 5px;
  margin-left: auto;
  padding-right: 4px;
  color: #777;
`;
